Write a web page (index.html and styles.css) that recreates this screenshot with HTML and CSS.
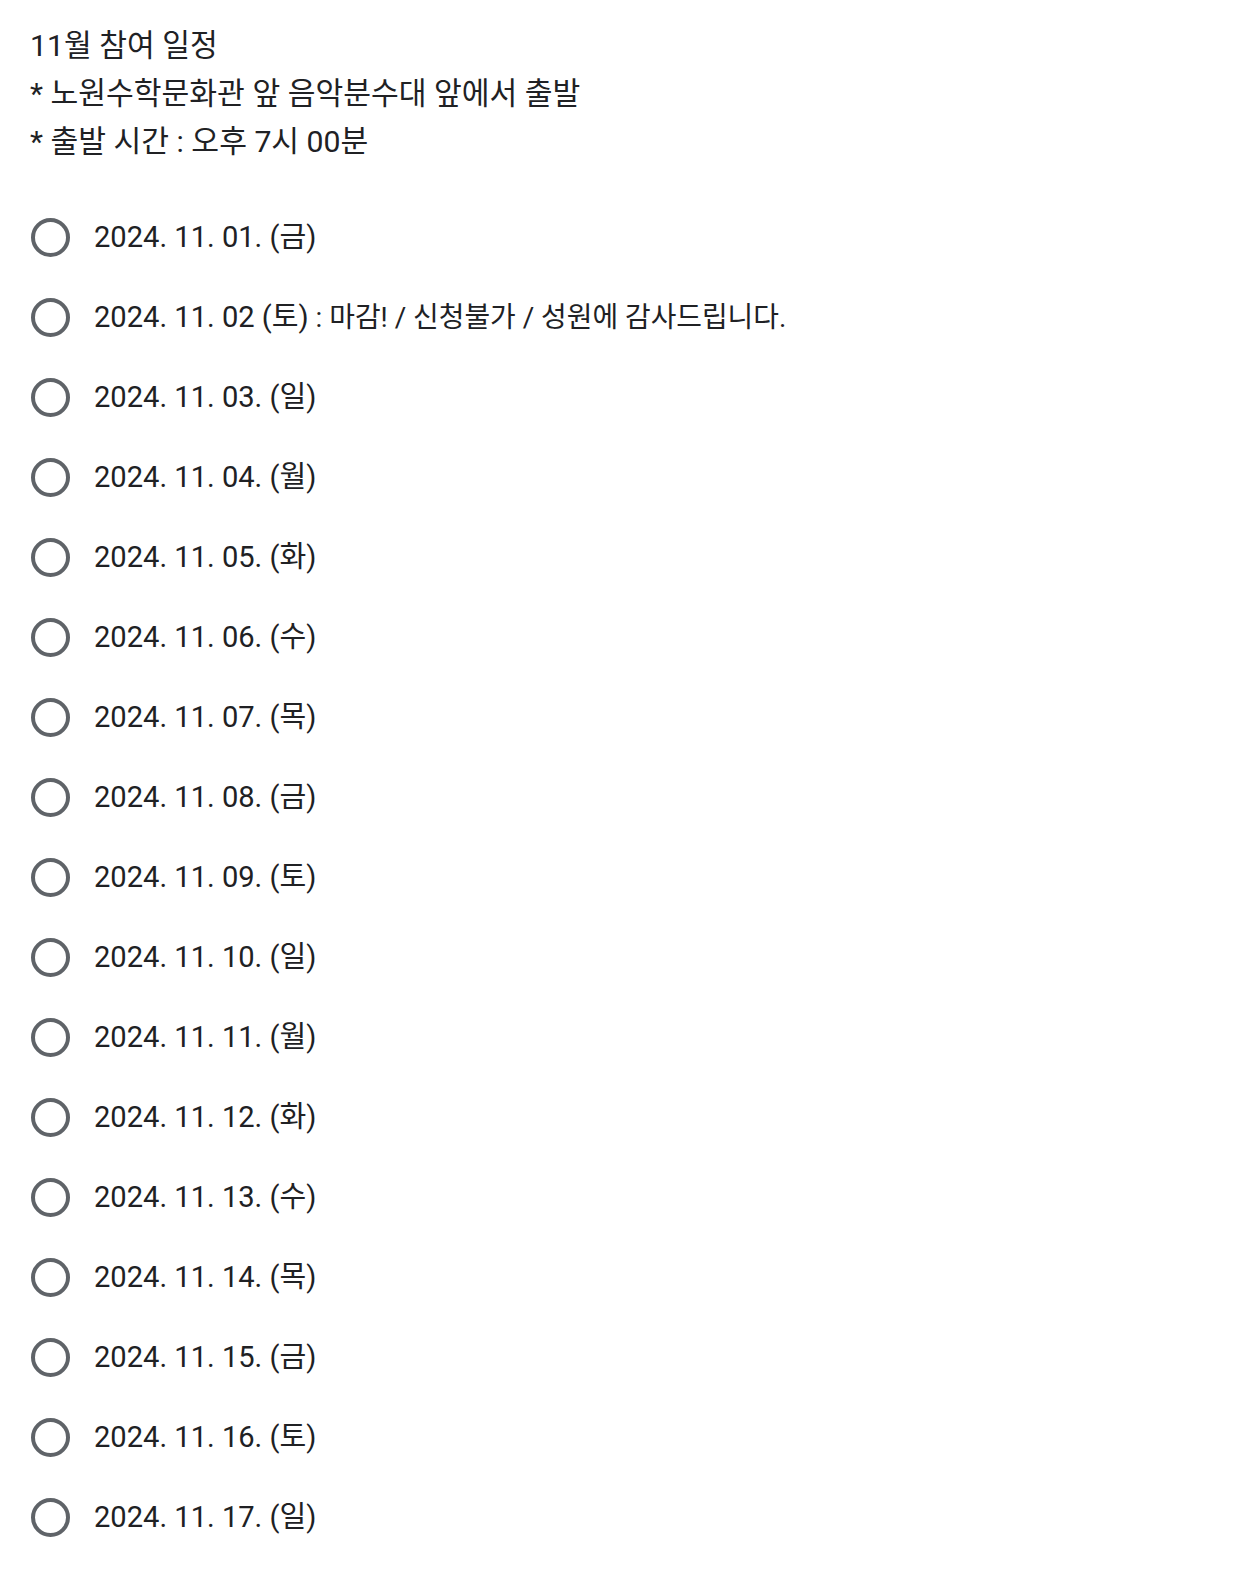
FILE: index.html
```html
<!DOCTYPE html>
<html lang="ko">
<head>
<meta charset="utf-8">
<link rel="stylesheet" href="styles.css">
</head>
<body>
<div class="form">
  <div class="title">
    <div>11월 참여 일정</div>
    <div>* 노원수학문화관 앞 음악분수대 앞에서 출발</div>
    <div>* 출발 시간 : 오후 7시 00분</div>
  </div>
  <div class="options">
    <label class="opt"><span class="radio"></span><span class="txt">2024. 11. 01. (금)</span></label>
    <label class="opt"><span class="radio"></span><span class="txt">2024. 11. 02 (토)<span class="note"> : 마감! / 신청불가 / 성원에 감사드립니다.</span></span></label>
    <label class="opt"><span class="radio"></span><span class="txt">2024. 11. 03. (일)</span></label>
    <label class="opt"><span class="radio"></span><span class="txt">2024. 11. 04. (월)</span></label>
    <label class="opt"><span class="radio"></span><span class="txt">2024. 11. 05. (화)</span></label>
    <label class="opt"><span class="radio"></span><span class="txt">2024. 11. 06. (수)</span></label>
    <label class="opt"><span class="radio"></span><span class="txt">2024. 11. 07. (목)</span></label>
    <label class="opt"><span class="radio"></span><span class="txt">2024. 11. 08. (금)</span></label>
    <label class="opt"><span class="radio"></span><span class="txt">2024. 11. 09. (토)</span></label>
    <label class="opt"><span class="radio"></span><span class="txt">2024. 11. 10. (일)</span></label>
    <label class="opt"><span class="radio"></span><span class="txt">2024. 11. 11. (월)</span></label>
    <label class="opt"><span class="radio"></span><span class="txt">2024. 11. 12. (화)</span></label>
    <label class="opt"><span class="radio"></span><span class="txt">2024. 11. 13. (수)</span></label>
    <label class="opt"><span class="radio"></span><span class="txt">2024. 11. 14. (목)</span></label>
    <label class="opt"><span class="radio"></span><span class="txt">2024. 11. 15. (금)</span></label>
    <label class="opt"><span class="radio"></span><span class="txt">2024. 11. 16. (토)</span></label>
    <label class="opt"><span class="radio"></span><span class="txt">2024. 11. 17. (일)</span></label>
  </div>
</div>
</body>
</html>
```
FILE: styles.css
```css
html, body {
  margin: 0;
  padding: 0;
  background: #ffffff;
}
body {
  font-family: Roboto, "Noto Sans CJK KR", sans-serif;
  color: #202124;
}
.form {
  padding: 22px 0 0 30px;
}
.title {
  font-size: 30.2px;
  line-height: 48px;
}
.options {
  margin-top: 31px;
  display: flex;
  flex-direction: column;
}
.opt {
  height: 80px;
  display: flex;
  align-items: center;
}
.radio {
  box-sizing: border-box;
  width: 39px;
  height: 39px;
  border: 4px solid #5f6368;
  border-radius: 50%;
  margin-left: 1px;
  flex: none;
}
.txt {
  margin-left: 24px;
  font-size: 29.1px;
  line-height: 40px;
}
.note {
  font-size: 27.9px;
}
```
